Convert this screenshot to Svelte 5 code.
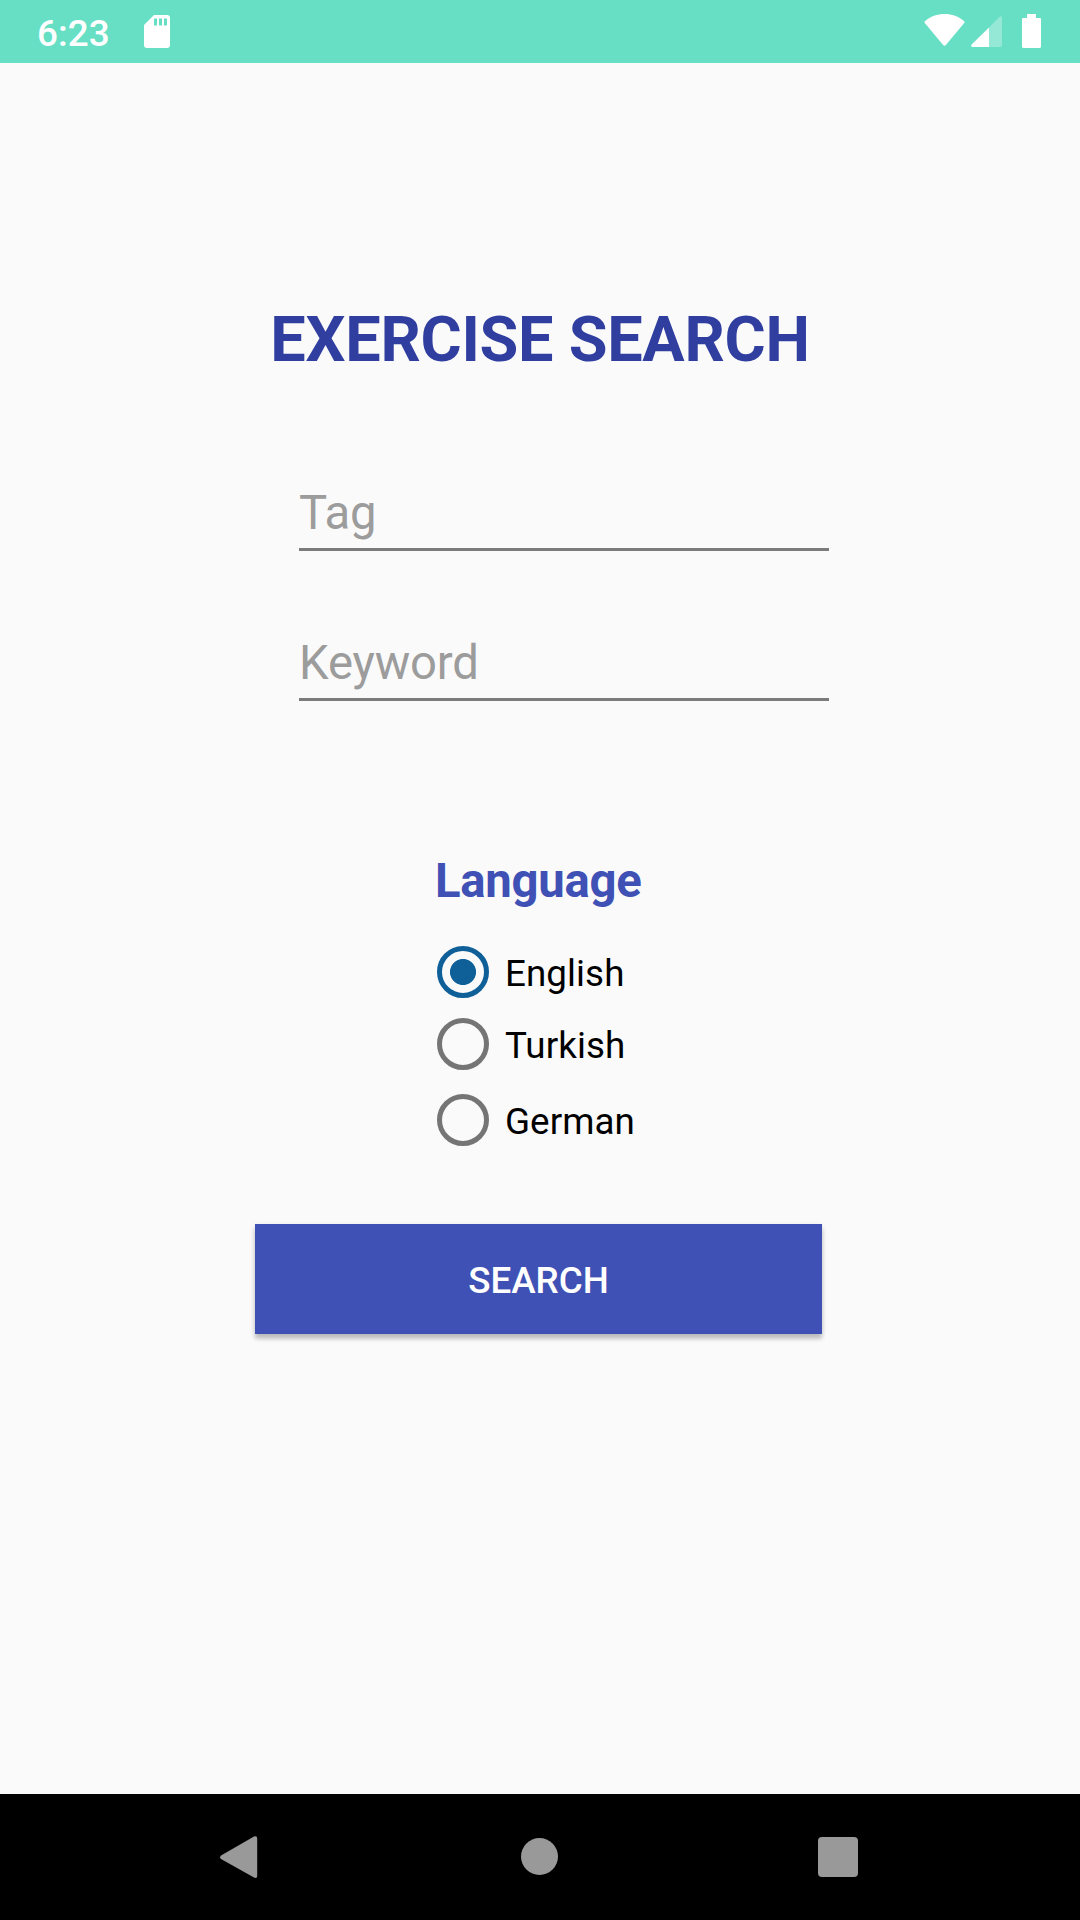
<script>
  let tag = $state('');
  let keyword = $state('');
  let language = $state('English');
  const languages = ['English', 'Turkish', 'German'];
</script>

<div class="screen">
  <header class="status">
    <span class="time">6:23</span>
    <svg class="sd" width="26" height="33" viewBox="0 0 26 33">
      <path fill="#fff" fill-rule="evenodd" d="M10 0H23a3 3 0 0 1 3 3V30a3 3 0 0 1-3 3H3a3 3 0 0 1-3-3V10ZM10 3.5V10.5H13V3.5ZM15 3.5V10.5H18V3.5ZM20 3.5V10.5H23V3.5Z" />
    </svg>
    <svg class="wifi" width="41" height="32" viewBox="0 0 41 32">
      <path fill="#fff" d="M.9 7.2C6.500 2.400 13 0 20.500 0S34.500 2.400 40.100 7.200Q41 8 40.200 9L21.900 31Q20.500 32.300 19.100 31L.8 9Q0 8 .9 7.200Z" />
    </svg>
    <svg class="signal" width="31" height="31" viewBox="0 0 31 31">
      <path fill="#fff" fill-opacity=".3" d="M18 11.600 28.600 .8Q31 -.8 31 2V29a2 2 0 0 1-2 2H18Z" />
      <path fill="#fff" d="M18 11.600V31H1.500Q-.8 30.500 .6 28.600Z" />
    </svg>
    <svg class="battery" width="19" height="34" viewBox="0 0 19 34">
      <path fill="#fff" d="M5 0H14V4H18a1 1 0 0 1 1 1V32.500a1.500 1.500 0 0 1-1.500 1.500H1.500A1.500 1.500 0 0 1 0 32.500V5a1 1 0 0 1 1-1H5Z" />
    </svg>
  </header>

  <main>
    <h1>EXERCISE SEARCH</h1>

    <div class="fields">
      <input type="text" placeholder="Tag" bind:value={tag} />
      <input type="text" placeholder="Keyword" bind:value={keyword} />
    </div>

    <section class="language">
      <h2>Language</h2>
      <div class="options">
        {#each languages as name}
          <label>
            <input type="radio" name="language" value={name} bind:group={language} />
            <span>{name}</span>
          </label>
        {/each}
      </div>
    </section>

    <button class="search">SEARCH</button>
  </main>

  <nav>
    <svg width="38" height="43" viewBox="0 0 38 43">
      <path fill="#999" d="M1 19.400 34 .6Q37.200 -.6 37.200 2.500V39.700Q37.200 43 34 41.600L1 23Q-.8 21.200 1 19.400Z" />
    </svg>
    <svg class="home" width="38" height="38" viewBox="0 0 38 38">
      <circle cx="19.500" cy="18.500" r="18.500" fill="#999" />
    </svg>
    <svg width="40" height="40" viewBox="0 0 40 40">
      <rect width="40" height="40" rx="4" fill="#999" />
    </svg>
  </nav>
</div>

<style>
  :global(body) {
    margin: 0;
    background: #fafafa;
  }
  .screen {
    display: flex;
    flex-direction: column;
    width: 1080px;
    height: 1920px;
    overflow: hidden;
    background: #fafafa;
    font-family: Roboto, sans-serif;
    font-size: 36.75px;
    color: #000;
  }
  svg {
    display: block;
    flex: none;
  }
  .status {
    box-sizing: border-box;
    display: flex;
    align-items: flex-start;
    height: 63px;
    padding: 14px 39px 0 37px;
    background: #67dfc5;
    color: #fff;
  }
  .time {
    width: 107px;
    line-height: 39px;
    font-weight: 500;
    letter-spacing: 0.1px;
  }
  .sd {
    margin-top: 1px;
  }
  .wifi {
    margin-left: auto;
  }
  .signal {
    margin: 2px 20px 0 6px;
  }
  main {
    flex: 1;
    display: flex;
    flex-direction: column;
    padding-top: 239px;
  }
  h1,
  h2 {
    margin: 0;
    font-weight: 700;
    letter-spacing: -0.27px;
  }
  h1 {
    font-size: 63px;
    line-height: 75px;
    color: #303f9f;
    text-align: center;
  }
  .fields {
    display: flex;
    flex-direction: column;
    gap: 84px;
    width: 530px;
    margin: 108px 0 0 299px;
  }
  .fields input {
    box-sizing: border-box;
    width: 100%;
    height: 66px;
    padding: 0 0 7px;
    border: 0;
    border-bottom: 3px solid #7b7b7b;
    border-radius: 0;
    outline: 0;
    background: transparent;
    font: 47.25px Roboto, sans-serif;
    letter-spacing: -0.15px;
    color: #000;
  }
  .fields input::placeholder {
    color: #9c9c9c;
    opacity: 1;
  }
  .language {
    margin: 152px 0 0 435px;
  }
  h2 {
    font-size: 47.25px;
    line-height: 56px;
    color: #3f51b5;
  }
  .options {
    margin-top: 27px;
  }
  label {
    display: flex;
    align-items: center;
    height: 72px;
  }
  label:last-child {
    margin-top: 4px;
  }
  label input {
    box-sizing: border-box;
    appearance: none;
    width: 52px;
    height: 52px;
    margin: 0 16px 0 2px;
    border: 5px solid #757575;
    border-radius: 50%;
  }
  label input:checked {
    border-color: #0f6099;
    background: radial-gradient(circle, #0f6099 12.6px, transparent 13.4px);
  }
  label span {
    padding-top: 3px;
    letter-spacing: 0.08px;
  }
  .search {
    width: 567px;
    height: 110px;
    margin: 68px 0 0 255px;
    padding: 3px 0 0;
    border: 0;
    background: #3f51b5;
    box-shadow: 0 5px 4px rgba(0, 0, 0, 0.18), 0 2px 6px rgba(0, 0, 0, 0.12);
    font: 500 36.75px Roboto, sans-serif;
    color: #fff;
  }
  nav {
    box-sizing: border-box;
    display: flex;
    align-items: center;
    justify-content: space-between;
    height: 126px;
    padding: 0 222px 0 220px;
    background: #000;
  }
  .home {
    margin-left: 2px;
  }
</style>
